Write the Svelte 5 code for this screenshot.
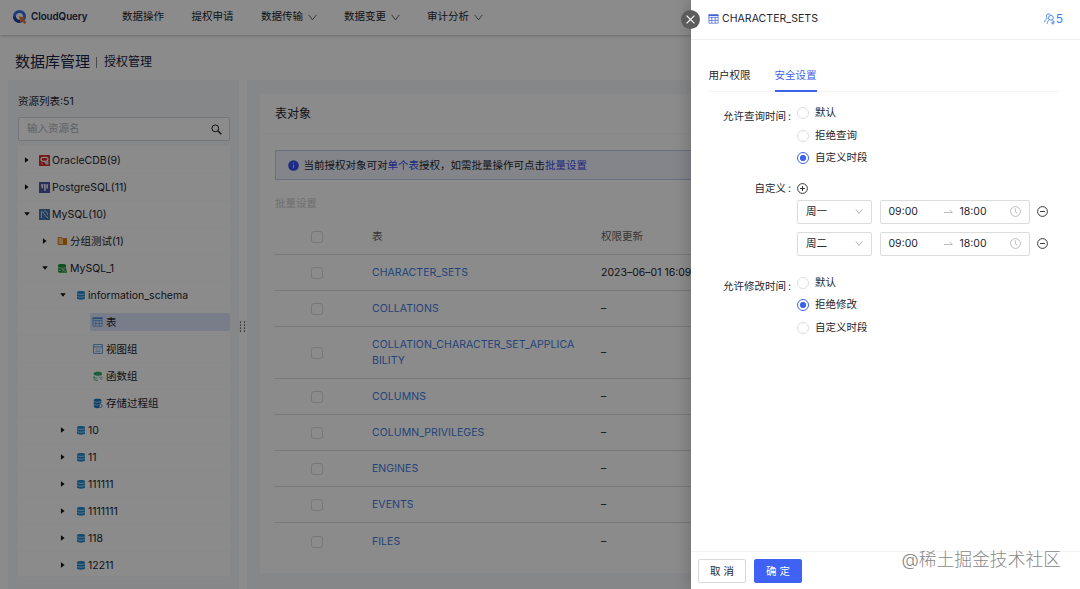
<script>
	const menus = [
		{ name: '数据操作' },
		{ name: '提权申请' },
		{ name: '数据传输', drop: true },
		{ name: '数据变更', drop: true },
		{ name: '审计分析', drop: true }
	];

	const tree = [
		{ name: 'OracleCDB(9)', level: 0, icon: 'oracle', arrow: 'right' },
		{ name: 'PostgreSQL(11)', level: 0, icon: 'pg', arrow: 'right' },
		{ name: 'MySQL(10)', level: 0, icon: 'mysql', arrow: 'down' },
		{ name: '分组测试(1)', level: 1, icon: 'folder', arrow: 'right' },
		{ name: 'MySQL_1', level: 1, icon: 'conn', arrow: 'down' },
		{ name: 'information_schema', level: 2, icon: 'db', arrow: 'down' },
		{ name: '表', level: 3, icon: 'table' },
		{ name: '视图组', level: 3, icon: 'view' },
		{ name: '函数组', level: 3, icon: 'func' },
		{ name: '存储过程组', level: 3, icon: 'proc' },
		{ name: '10', level: 2, icon: 'db', arrow: 'right' },
		{ name: '11', level: 2, icon: 'db', arrow: 'right' },
		{ name: '111111', level: 2, icon: 'db', arrow: 'right' },
		{ name: '1111111', level: 2, icon: 'db', arrow: 'right' },
		{ name: '118', level: 2, icon: 'db', arrow: 'right' },
		{ name: '12211', level: 2, icon: 'db', arrow: 'right' }
	];

	const tables = [
		{ name: 'CHARACTER_SETS', updated: '2023–06–01 16:09:12' },
		{ name: 'COLLATIONS', updated: '–' },
		{ name: 'COLLATION_CHARACTER_SET_APPLICABILITY', updated: '–' },
		{ name: 'COLUMNS', updated: '–' },
		{ name: 'COLUMN_PRIVILEGES', updated: '–' },
		{ name: 'ENGINES', updated: '–' },
		{ name: 'EVENTS', updated: '–' },
		{ name: 'FILES', updated: '–' }
	];

	let selected = $state('表');
	let tab = $state('安全设置');
	let query = $state('自定义时段');
	let modify = $state('拒绝修改');
	let periods = $state([
		{ day: '周一', from: '09:00', to: '18:00' },
		{ day: '周二', from: '09:00', to: '18:00' }
	]);

	function addPeriod() {
		periods.push({ day: '周三', from: '09:00', to: '18:00' });
	}

	function removePeriod(i) {
		periods.splice(i, 1);
	}
</script>

{#snippet chevron()}
	<svg class="chevron" width="9" height="7" viewBox="0 0 9 7">
		<path d="M0.7 0.9 L4.5 5.8 L8.3 0.9" fill="none" stroke="currentColor" stroke-width="0.9" />
	</svg>
{/snippet}

{#snippet grid()}
	<svg width="11" height="10" viewBox="0 0 11 10">
		<path d="M0.9 0.8h9.2v8.4H0.9z M0.9 3.6h9.2 M0.9 6.4h9.2 M3.8 2.8v6.4 M7.2 2.8v6.4" fill="none" stroke="currentColor" stroke-width="0.7" />
		<path d="M0.6 0.5h9.8v1.6H0.6z" fill="currentColor" />
	</svg>
{/snippet}

{#snippet treeIcon(icon)}
	{#if icon === 'oracle'}
		<svg width="11" height="11" viewBox="0 0 11 11">
			<rect width="11" height="11" rx="0.6" fill="#d92a2c" />
			<rect x="2" y="2.3" width="7" height="4" rx="2" fill="none" stroke="#fff" stroke-width="1.2" />
			<path d="M5 6.6h4.5v2.9H6.8z" fill="#c9e4f4" />
			<path d="M2 8l2 1.4" stroke="#f3a7a0" />
		</svg>
	{:else if icon === 'pg'}
		<svg width="11" height="11" viewBox="0 0 11 11">
			<rect width="11" height="11" rx="0.6" fill="#4b55a6" />
			<path d="M1.8 2.2h2.3v4.2L2.7 6zM4.7 2h2v7H5.3zM7.3 2.2h2l-.4 4.2H7.3z" fill="#e4e7f8" />
		</svg>
	{:else if icon === 'mysql'}
		<svg width="11" height="11" viewBox="0 0 11 11">
			<rect width="11" height="11" rx="0.6" fill="#4474ad" />
			<path d="M2.4 9V2.5c2.3 0 2.9 2.8 3.8 4.1L9.2 9M5 1.8c2.6.3 3.8 1.8 3.3 4.2" fill="none" stroke="#d9e7f5" stroke-width="0.9" />
		</svg>
	{:else if icon === 'folder'}
		<svg width="11" height="10" viewBox="0 0 11 10">
			<path d="M1.2 1.5h3.4l1 1.2h4v5.8H1.2z" fill="#f3c88d" stroke="#d97908" />
			<path d="M6 2.7h3.8v6H6z" fill="#d97908" />
		</svg>
	{:else if icon === 'conn'}
		<svg width="11" height="11" viewBox="0 0 11 11">
			<path d="M1 2C1 .7 9 .7 9 2v3L10 9.7H2L1 8.8z" fill="#1c9433" />
			<path d="M1 4.4c2 1 5 1 7.8.2M1 7l3 .5M5 6.1l3.8 2.7M5.3 8.6l2.2-2.8" stroke="#fff" stroke-width="0.6" fill="none" />
		</svg>
	{:else if icon === 'db'}
		<svg width="10" height="11" viewBox="0 0 10 11">
			<path d="M1 2.1C1 .6 9 .6 9 2.1v6.5c0 1.5-8 1.5-8 0z" fill="#2389ce" />
			<path d="M.4 3.5c1.8 1.2 7.4 1.2 9.2 0M.4 6.3c1.8 1.2 7.4 1.2 9.2 0" stroke="#e2f2ff" stroke-width="0.7" fill="none" />
		</svg>
	{:else if icon === 'table'}
		{@render grid()}
	{:else if icon === 'view'}
		<svg width="10" height="10" viewBox="0 0 10 10">
			<path d="M.6.6h8.8v8.8H.6zM.6 2.9h8.8" fill="none" stroke="#4c8fd6" stroke-width="0.9" />
			<path d="M2.5 5h2M2.5 7.3h5M5.5 6l2-1.4" stroke="#4c8fd6" stroke-width="0.8" />
		</svg>
	{:else if icon === 'func'}
		<svg width="10" height="10" viewBox="0 0 10 10">
			<path d="M.7 2.2C.7.2 9 .2 9 2.2v1.5C7 5 3 5 .7 3.7z" fill="#2fae68" />
			<path d="M1 5v3.5c1 .8 3 1 4 .8M1 6.5c1 .5 2.3.7 3.5.6M6 5.5l3 3.5M9 5.6V7" stroke="#2fae68" stroke-width="0.8" fill="none" />
		</svg>
	{:else}
		<svg width="10" height="11" viewBox="0 0 10 11">
			<path d="M.8 2C.8.4 8.4.4 8.4 2v3l-2 1v4C4 10.4.8 10 .8 8.8z" fill="#1d78bd" />
			<path d="M.6 3.4c1.5 1 6.3 1 8 0M.6 6.3c1.5.8 3.5.9 5 .7" stroke="#d6ebfb" stroke-width="0.7" fill="none" />
			<circle cx="7.6" cy="7.9" r="1.6" fill="none" stroke="#4b8fd6" stroke-width="0.9" />
		</svg>
	{/if}
{/snippet}

{#snippet radios(options, value, pick)}
	<div class="radios">
		{#each options as option}
			<button class="radio" class:checked={option === value} onclick={() => pick(option)}>
				<i></i>{option}
			</button>
		{/each}
	</div>
{/snippet}

<div class="page">
	<header>
		<div class="logo">
			<svg width="16" height="16" viewBox="0 0 16 16">
				<circle cx="7.5" cy="7.4" r="5" fill="none" stroke="#3a6fe0" stroke-width="3" />
				<path d="M2.5 7.4A5 5 0 0 0 8 12.4" fill="none" stroke="#1c3fa6" stroke-width="3" />
				<path d="M7 7.2l6.2 1.6-1.7 1.5 3 3-1.8 1.7-3-3-1.5 1.4z" fill="#e8743a" />
			</svg>
			<b>CloudQuery</b>
		</div>
		<nav>
			{#each menus as menu}
				<a href="#top">{menu.name}{#if menu.drop}{@render chevron()}{/if}</a>
			{/each}
		</nav>
	</header>

	<div class="crumbs">
		<h1>数据库管理</h1>
		<span class="bar"></span>
		<h2>授权管理</h2>
	</div>

	<div class="body">
		<aside>
			<p class="count">资源列表:51</p>
			<div class="search">
				<span>输入资源名</span>
				<svg width="11" height="11" viewBox="0 0 11 11">
					<circle cx="4.3" cy="4.3" r="3.4" fill="none" stroke="#222" stroke-width="1" />
					<path d="M6.8 6.8l3.5 3.5" stroke="#222" stroke-width="1.4" />
				</svg>
			</div>
			<div class="tree">
				{#each tree as node}
					<div class="node l{node.level}">
						{#if node.arrow}
							<span class="arrow {node.arrow}"></span>
						{/if}
						<button class="title" class:selected={node.name === selected} onclick={() => (selected = node.name)}>
							<span class="icon">{@render treeIcon(node.icon)}</span>
							<span class="name">{node.name}</span>
						</button>
					</div>
				{/each}
			</div>
		</aside>

		<div class="handle">
			<svg width="7" height="12" viewBox="0 0 7 12">
				<path d="M1.5 0.5v11M5.5 0.5v11" stroke="#333" stroke-width="1.2" stroke-dasharray="1.3 1.7" />
			</svg>
		</div>

		<main>
			<section>
				<h3>表对象</h3>
				<div class="content">
					<div class="alert">
						<svg width="11" height="11" viewBox="0 0 11 11">
							<circle cx="5.5" cy="5.5" r="5.3" fill="#3a4df0" />
							<path d="M5.5 4.7v3.6M5.5 2.5v1.1" stroke="#ccd" stroke-width="1" />
						</svg>
						<p>当前授权对象可对<em>单个表</em>授权，如需批量操作可点击<em>批量设置</em></p>
					</div>
					<div class="batch">批量设置</div>
					<div class="row head">
						<span class="check"></span>
						<span>表</span>
						<span>权限更新</span>
					</div>
					{#each tables as table}
						<div class="row">
							<span class="check"></span>
							<a href="#top">{table.name}</a>
							<span class="date">{table.updated}</span>
						</div>
					{/each}
				</div>
			</section>
		</main>
	</div>

	<div class="mask"></div>

	<div class="drawer">
		<button class="close" aria-label="close">
			<svg width="9" height="9" viewBox="0 0 9 9">
				<path d="M.6.6l7.8 7.8M8.4.6L.6 8.4" stroke="#fff" stroke-width="1.2" />
			</svg>
		</button>
		<div class="drawer-head">
			<span class="blue">{@render grid()}</span>
			<span class="drawer-title">CHARACTER_SETS</span>
			<span class="users">
				<svg width="11" height="12" viewBox="0 0 11 12">
					<circle cx="6.9" cy="4.8" r="2.4" />
					<path d="M5.3 6.7C3.8 7.7 3.2 9 3.2 10.8M8.3 6.8c1.1.7 1.7 1.5 2 2.5M7.2 10h3.3M8.9 8.4v3.2" />
					<path d="M6.3 1.5C5.2.3 2.4.9 2.4 3.3c0 1 .4 1.6 1 2.1C1.8 6 .8 7.2.6 9.2" />
				</svg>5
			</span>
		</div>
		<div class="drawer-body">
			<div class="tabs">
				{#each ['用户权限', '安全设置'] as name}
					<button class:active={tab === name} onclick={() => (tab = name)}>{name}</button>
				{/each}
			</div>
			<div class="item first">
				<span class="label">允许查询时间<i>:</i></span>
				{@render radios(['默认', '拒绝查询', '自定义时段'], query, (v) => (query = v))}
			</div>
			<div class="item custom">
				<span class="label">自定义<i>:</i></span>
				<div class="periods">
					<button class="round" aria-label="add" onclick={addPeriod}>
						<svg width="11" height="11" viewBox="0 0 11 11">
							<circle cx="5.5" cy="5.5" r="4.9" /><path d="M3 5.5h5M5.5 3v5" />
						</svg>
					</button>
					{#each periods as period, i}
						<div class="period">
							<div class="select">{period.day}{@render chevron()}</div>
							<div class="range">
								<span>{period.from}</span>
								<svg class="to" width="9" height="5" viewBox="0 0 9 5">
									<path d="M0 3.5h8.4L5.5 1" />
								</svg>
								<span>{period.to}</span>
								<svg class="clock" width="11" height="11" viewBox="0 0 11 11">
									<circle cx="5.5" cy="5.5" r="4.9" /><path d="M5.3 2.5v3.3l2.1 1.3" />
								</svg>
							</div>
							<button class="round" aria-label="remove" onclick={() => removePeriod(i)}>
								<svg width="11" height="11" viewBox="0 0 11 11">
									<circle cx="5.5" cy="5.5" r="4.9" /><path d="M3 5.5h5" />
								</svg>
							</button>
						</div>
					{/each}
				</div>
			</div>
			<div class="item last">
				<span class="label">允许修改时间<i>:</i></span>
				{@render radios(['默认', '拒绝修改', '自定义时段'], modify, (v) => (modify = v))}
			</div>
		</div>
		<footer>
			<button class="btn">取 消</button>
			<button class="btn primary">确 定</button>
		</footer>
	</div>
	<div class="watermark">@稀土掘金技术社区</div>
</div>

<style>
	:global(body) {
		margin: 0;
		overflow: hidden;
	}

	.page {
		position: relative;
		display: flex;
		flex-direction: column;
		width: 1080px;
		height: 589px;
		overflow: hidden;
		background: #fdfdfd;
		color: #23252e;
		font-family: Inter, 'Noto Sans CJK SC', sans-serif;
		font-size: 10.5px;
		line-height: 16px;
	}

	.page * {
		box-sizing: border-box;
	}

	button {
		margin: 0;
		padding: 0;
		border: none;
		background: none;
		color: inherit;
		font: inherit;
		cursor: pointer;
	}

	a {
		color: inherit;
		text-decoration: none;
	}

	h1,
	h2,
	h3,
	p {
		margin: 0;
		font-weight: 400;
	}

	svg {
		display: block;
		flex: none;
	}

	header {
		display: flex;
		align-items: center;
		flex: none;
		height: 35px;
		padding: 0 0 2px 12px;
		box-shadow: 0 1px 3px rgba(0, 0, 0, 0.22);
	}

	.logo {
		display: flex;
		align-items: center;
		gap: 3px;
		width: 110px;
		color: #22284c;
		font-size: 9.8px;
	}

	.logo b {
		font-weight: 600;
		letter-spacing: -0.05px;
	}

	nav {
		display: flex;
		gap: 27.5px;
	}

	nav a {
		display: flex;
		align-items: center;
		gap: 4.5px;
		padding-top: 1px;
	}

	nav .chevron {
		color: #555;
	}

	.crumbs {
		display: flex;
		align-items: center;
		flex: none;
		height: 45px;
		padding: 9px 0 0 15px;
		color: #1b2244;
	}

	h1 {
		font-size: 15px;
	}

	.bar {
		width: 1px;
		height: 11px;
		margin: 0 7px 0 6px;
		background: #888;
	}

	h2 {
		font-size: 12px;
	}

	.body {
		display: flex;
		flex: 1;
		padding-left: 8px;
	}

	aside {
		width: 231px;
		padding: 14px 9px 0 10px;
		background: #f4f6f9;
	}

	.search {
		display: flex;
		align-items: center;
		justify-content: space-between;
		height: 24px;
		margin-top: 7px;
		padding: 0 7px 0 8px;
		border: 1px solid #d4d6da;
		border-radius: 2px;
		background: #fdfdfd;
		color: #b0b2b6;
	}

	.tree {
		height: 430px;
		margin-top: 5px;
		padding-top: 1px;
		background: #fdfdfd;
	}

	.node {
		display: flex;
		align-items: center;
		height: 27px;
		border-bottom: 1px solid #f8f9fa;
	}

	.l0 {
		padding-left: 6px;
	}

	.l1 {
		padding-left: 24px;
	}

	.l2 {
		padding-left: 42px;
	}

	.l3 {
		padding-left: 72px;
	}

	.arrow {
		flex: none;
		width: 6px;
		height: 6px;
		margin-right: 8px;
		background: #111;
	}

	.arrow.right {
		clip-path: polygon(16% 4%, 76% 50%, 16% 96%);
	}

	.arrow.down {
		clip-path: polygon(4% 20%, 96% 20%, 50% 78%);
	}

	.title {
		display: flex;
		align-items: center;
		flex: 1;
		height: 18px;
		white-space: nowrap;
	}

	.title.selected {
		border-radius: 2px;
		background: #dce3fb;
	}

	.icon {
		display: flex;
		justify-content: center;
		width: 13px;
		margin-right: 1px;
		color: #4c92dc;
	}

	.name {
		padding-top: 2px;
	}

	.l3 .icon {
		width: 15px;
	}

	.handle {
		display: flex;
		align-items: center;
		width: 8px;
		padding-bottom: 16px;
	}

	main {
		flex: 1;
		padding: 14px 0 16px 13px;
		background: #f4f6f9;
	}

	section {
		height: 479px;
		background: #fdfdfd;
	}

	h3 {
		height: 40px;
		padding: 12px 15px 0;
		border-bottom: 1px solid #f8f8f8;
		font-size: 12px;
	}

	.content {
		padding: 16px 0 0 15px;
	}

	.alert {
		display: flex;
		align-items: center;
		gap: 5px;
		height: 30px;
		padding-left: 12px;
		border: 1px solid #c0cdec;
		background: #eef3fd;
	}

	.alert p {
		margin-left: -0.5px;
		padding-top: 1px;
	}

	em {
		color: #3a48e8;
		font-style: normal;
	}

	.batch {
		margin-top: 16px;
		color: #ccc;
	}

	.row {
		display: grid;
		grid-template-columns: 84px 206px 160px;
		column-gap: 13px;
		align-items: center;
		min-height: 36px;
		padding: 10px 0 9px;
		border-bottom: 1px solid #dadada;
	}

	.row.head {
		margin-top: 7px;
		color: #666;
	}

	.row:last-child {
		border: none;
	}

	.row a {
		color: #3e7cdf;
		overflow-wrap: anywhere;
		letter-spacing: 0.05px;
	}

	.row .date {
		padding-left: 10px;
		white-space: nowrap;
	}

	.row.head span:last-child {
		padding-left: 10px;
	}

	.check {
		justify-self: center;
		width: 12px;
		height: 12px;
		border: 1px solid #dadada;
		border-radius: 3px;
	}

	.mask {
		position: absolute;
		inset: 0;
		background: rgba(0, 0, 0, 0.45);
	}

	.drawer {
		display: flex;
		flex-direction: column;
		position: absolute;
		top: 0;
		right: 0;
		bottom: 0;
		width: 389px;
		background: #fff;
		box-shadow: -3px 0 14px rgba(0, 0, 0, 0.18);
	}

	.close {
		display: flex;
		align-items: center;
		justify-content: center;
		position: absolute;
		top: 10px;
		left: -10px;
		width: 19px;
		height: 19px;
		border-radius: 50%;
		background: #5c5c5c;
	}

	.drawer-head {
		display: flex;
		align-items: center;
		flex: none;
		height: 40px;
		padding: 0 17px 1px 17px;
		border-bottom: 1px solid #f0f0f0;
	}

	.blue {
		margin-right: 3px;
		color: #3c62d8;
	}

	.drawer-title {
		letter-spacing: 0.05px;
	}

	.users {
		display: flex;
		align-items: center;
		gap: 1px;
		margin-left: auto;
		color: #3e7fe8;
		font-size: 12px;
	}

	.users svg {
		fill: none;
		stroke: currentColor;
		stroke-width: 0.9;
	}

	.drawer-body {
		flex: 1;
		padding: 19px 21px 0 17px;
	}

	.tabs {
		display: flex;
		gap: 24px;
		height: 33px;
		padding-left: 0.5px;
		border-bottom: 1px solid #f5f5f5;
	}

	.tabs button {
		height: 33px;
		padding: 2px 0 0;
		border-bottom: 2px solid transparent;
	}

	.tabs .active {
		border-color: #3f62ec;
		color: #3f62ec;
	}

	.item {
		display: flex;
		align-items: flex-start;
	}

	.first {
		margin-top: 10px;
	}

	.custom {
		margin-top: 7px;
	}

	.last {
		margin-top: 8px;
	}

	.label {
		width: 83px;
		margin: 7px 6px 0 0;
		text-align: right;
	}

	.custom .label {
		margin-top: 4px;
	}

	.label i {
		margin-left: 2px;
		font-style: normal;
	}

	.radio {
		display: flex;
		align-items: center;
		height: 22.5px;
	}

	.radio i {
		width: 12px;
		height: 12px;
		margin-right: 6px;
		border: 1px solid #dedede;
		border-radius: 50%;
	}

	.radio.checked i {
		border-color: #3f62ec;
		background: radial-gradient(circle, #3f62ec 2.8px, transparent 3.4px);
	}

	.round {
		display: block;
	}

	.round svg {
		fill: none;
		stroke: #222;
		stroke-width: 0.9;
	}

	.periods > .round {
		margin: 6px 0 6px;
	}

	.period {
		display: flex;
		align-items: center;
		gap: 8px;
		height: 24px;
		margin-bottom: 8px;
	}

	.period > .round {
		margin-left: -1px;
	}

	.select,
	.range {
		display: flex;
		align-items: center;
		height: 24px;
		border: 1px solid #dcdcdc;
		border-radius: 2px;
	}

	.select {
		justify-content: space-between;
		width: 75px;
		padding: 0 8px;
	}

	.select .chevron {
		width: 8px;
		color: #aaa;
	}

	.range {
		width: 150px;
		padding: 0 8px;
	}

	.range span:first-child {
		width: 55px;
		margin-left: -0.5px;
	}

	.range svg {
		fill: none;
		stroke: #b5b5b5;
		stroke-width: 0.9;
	}

	.to {
		margin-right: 7px;
	}

	.clock {
		margin-left: auto;
	}

	footer {
		display: flex;
		gap: 8px;
		flex: none;
		height: 38px;
		padding: 7px;
		border-top: 1px solid #f3f3f3;
	}

	.btn {
		width: 48px;
		height: 24px;
		padding-top: 1px;
		border: 1px solid #d9d9d9;
		border-radius: 2px;
		white-space: nowrap;
	}

	.btn.primary {
		border-color: #3f62f5;
		background: #3f62f5;
		color: #fff;
	}

	.watermark {
		position: absolute;
		top: 547px;
		right: 19px;
		color: #888;
		font-size: 17.8px;
		font-weight: 300;
		line-height: 26px;
		text-shadow: 0 0 1px #fff;
	}
</style>
